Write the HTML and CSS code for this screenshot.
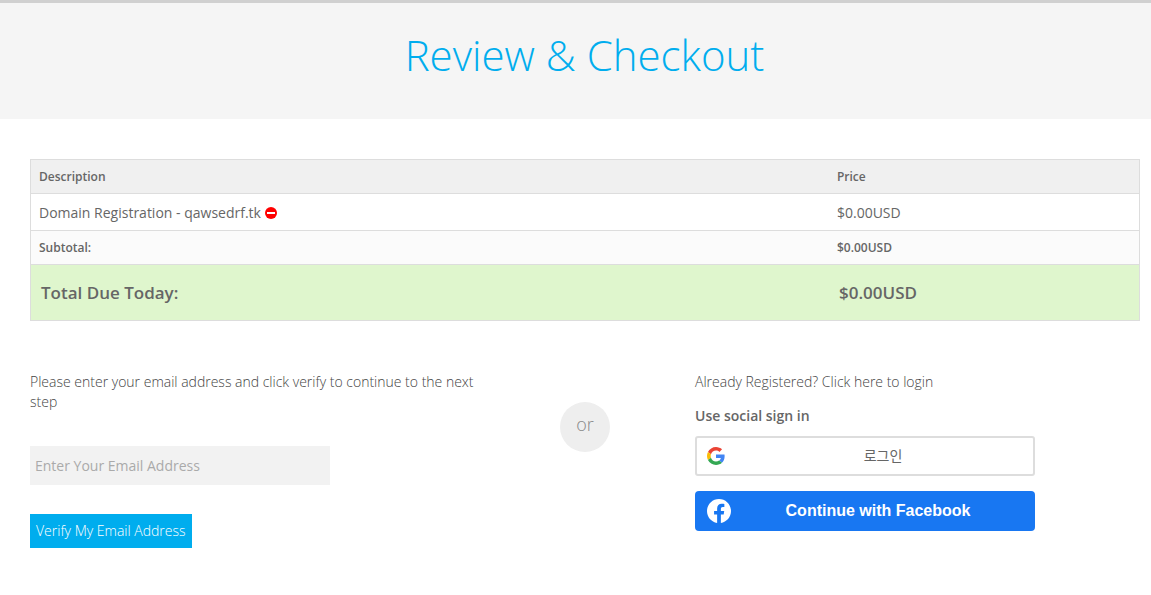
FILE: index.html
```html
<!DOCTYPE html>
<html lang="en">
<head>
    <meta charset="UTF-8">
    <meta name="viewport" content="width=device-width, initial-scale=1.0">
    <title>Review &amp; Checkout</title>
    <link rel="stylesheet" href="styles.css">
</head>
<body>
    <header class="page-header">
        <h1>Review &amp; Checkout</h1>
    </header>

    <main class="container">
        <table class="cart">
            <thead>
                <tr>
                    <th class="description">Description</th>
                    <th>Price</th>
                </tr>
            </thead>
            <tbody>
                <tr class="item">
                    <td>Domain Registration - qawsedrf.tk
                        <button type="button" class="remove" aria-label="Remove">
                            <svg width="12" height="12" viewBox="0 0 12 12">
                                <circle cx="6" cy="6" r="6" fill="#f00"/>
                                <rect x="2" y="5" width="8" height="2" fill="#fff"/>
                            </svg>
                        </button>
                    </td>
                    <td>$0.00USD</td>
                </tr>
                <tr class="subtotal">
                    <td>Subtotal:</td>
                    <td>$0.00USD</td>
                </tr>
                <tr class="total">
                    <td>Total Due Today:</td>
                    <td>$0.00USD</td>
                </tr>
            </tbody>
        </table>

        <div class="checkout">
            <form class="verify">
                <label for="email">Please enter your email address and click verify to continue to the next step</label>
                <input type="email" id="email" placeholder="Enter Your Email Address">
                <button type="submit" class="verify-btn">Verify My Email Address</button>
            </form>

            <div class="or">or</div>

            <div class="login">
                <a href="#" class="login-link">Already Registered? Click here to login</a>
                <h2>Use social sign in</h2>
                <button type="button" class="social google">
                    <svg width="18" height="18" viewBox="0 0 48 48">
                        <path fill="#ea4335" d="M24 9.5c3.54 0 6.71 1.22 9.21 3.6l6.85-6.85C35.9 2.38 30.47 0 24 0 14.62 0 6.51 5.38 2.56 13.22l7.98 6.19C12.43 13.72 17.74 9.5 24 9.5z"/>
                        <path fill="#4285f4" d="M46.98 24.55c0-1.57-.15-3.09-.38-4.55H24v9.02h12.94c-.58 2.96-2.26 5.48-4.78 7.18l7.73 6c4.51-4.18 7.09-10.36 7.09-17.65z"/>
                        <path fill="#fbbc05" d="M10.53 28.59c-.48-1.45-.76-2.99-.76-4.59s.27-3.14.76-4.59l-7.98-6.19C.92 16.46 0 20.12 0 24c0 3.88.92 7.54 2.56 10.78l7.97-6.19z"/>
                        <path fill="#34a853" d="M24 48c6.48 0 11.93-2.13 15.89-5.81l-7.73-6c-2.15 1.45-4.92 2.3-8.16 2.3-6.26 0-11.57-4.22-13.47-9.91l-7.98 6.19C6.51 42.62 14.62 48 24 48z"/>
                    </svg>
                    <span lang="ko">로그인</span>
                </button>
                <button type="button" class="social facebook">
                    <svg width="24" height="24" viewBox="0 0 24 24">
                        <path fill="#fff" d="M24 12.07C24 5.41 18.63 0 12 0S0 5.41 0 12.07c0 6.03 4.39 11.02 10.13 11.93v-8.44H7.08v-3.49h3.05V9.41c0-3.02 1.79-4.69 4.53-4.69 1.31 0 2.69.24 2.69.24v2.97h-1.52c-1.49 0-1.96.93-1.96 1.89v2.25h3.33l-.53 3.49h-2.8V24C19.61 23.09 24 18.1 24 12.07z"/>
                    </svg>
                    <span>Continue with Facebook</span>
                </button>
            </div>
        </div>
    </main>
</body>
</html>
```

FILE: styles.css
```css
* {
    margin: 0;
    padding: 0;
    box-sizing: border-box;
}

body {
    background-color: #fff;
    color: #666;
    font-family: "Open Sans", "Noto Sans CJK KR", sans-serif;
    font-size: 14px;
    line-height: 20px;
}

button,
input {
    border: none;
    font: inherit;
}

button {
    cursor: pointer;
}

.page-header {
    border-top: 3px solid #d0d0d0;
    padding: 27px 12px 39px 30px;
    background-color: #f5f5f5;
    text-align: center;
}

.page-header h1 {
    color: #00adee;
    font-size: 42px;
    font-weight: 300;
    line-height: 50px;
}

.container {
    padding: 40px 11px 40px 30px;
}

/* cart */
.cart {
    width: 100%;
    border: 1px solid #ddd;
    border-collapse: collapse;
}

.cart th,
.cart td {
    padding: 9px 8px 7px;
    border-bottom: 1px solid #ddd;
    text-align: left;
}

.cart th {
    padding: 7px 8px 6px;
    background-color: #f0f0f0;
    font-size: 12px;
    font-weight: 600;
}

.cart .description {
    width: 72%;
}

.cart .subtotal td {
    padding: 7px 8px 6px;
    background-color: #fbfbfb;
    font-size: 12px;
    font-weight: 600;
}

.cart .total td {
    padding: 18px 10px 17px;
    background-color: #dff6cd;
    font-size: 17px;
    font-weight: 600;
}

.remove {
    background: none;
    line-height: 12px;
    vertical-align: -1px;
}

.remove svg {
    display: block;
}

/* sign in */
.checkout {
    display: grid;
    grid-template-columns: 1fr 220px 1fr;
    margin-top: 51px;
}

.verify {
    display: flex;
    flex-direction: column;
    align-items: flex-start;
    color: #444;
    font-weight: 300;
}

.verify input {
    width: 300px;
    max-width: 100%;
    height: 39px;
    margin: 34px 0 29px;
    padding: 0 5px;
    background-color: #f2f2f2;
    color: #666;
    font-weight: 400;
}

.verify input::placeholder {
    color: #aaa;
}

.verify-btn {
    padding: 7px 6px;
    background-color: #00adee;
    color: #fff;
}

.or {
    width: 50px;
    height: 50px;
    margin: 30px auto 0;
    border-radius: 50%;
    background-color: #eee;
    color: #888;
    font-size: 18px;
    font-weight: 300;
    line-height: 44px;
    text-align: center;
}

.login-link {
    color: #444;
    font-weight: 300;
    text-decoration: none;
}

.login h2 {
    margin: 14px 0 10px;
    font-size: 14px;
    font-weight: 600;
}

.social {
    display: flex;
    align-items: center;
    width: 340px;
    max-width: 100%;
    height: 40px;
    margin-bottom: 15px;
    border-radius: 4px;
}

.social span {
    flex: 1;
    text-align: center;
}

.google {
    gap: 18px;
    padding: 0 10px;
    border: 2px solid #ddd;
    border-radius: 3px;
    background-color: #fff;
    color: #666;
    font-size: 14px;
}

.facebook {
    gap: 2px;
    padding: 0 12px;
    background-color: #1877f2;
    color: #fff;
    font-family: "Liberation Sans", Arial, sans-serif;
    font-size: 16px;
    font-weight: 700;
}

@media (max-width: 800px) {
    .checkout {
        grid-template-columns: 1fr;
        gap: 20px;
    }

    .or {
        margin-top: 0;
    }
}
```
